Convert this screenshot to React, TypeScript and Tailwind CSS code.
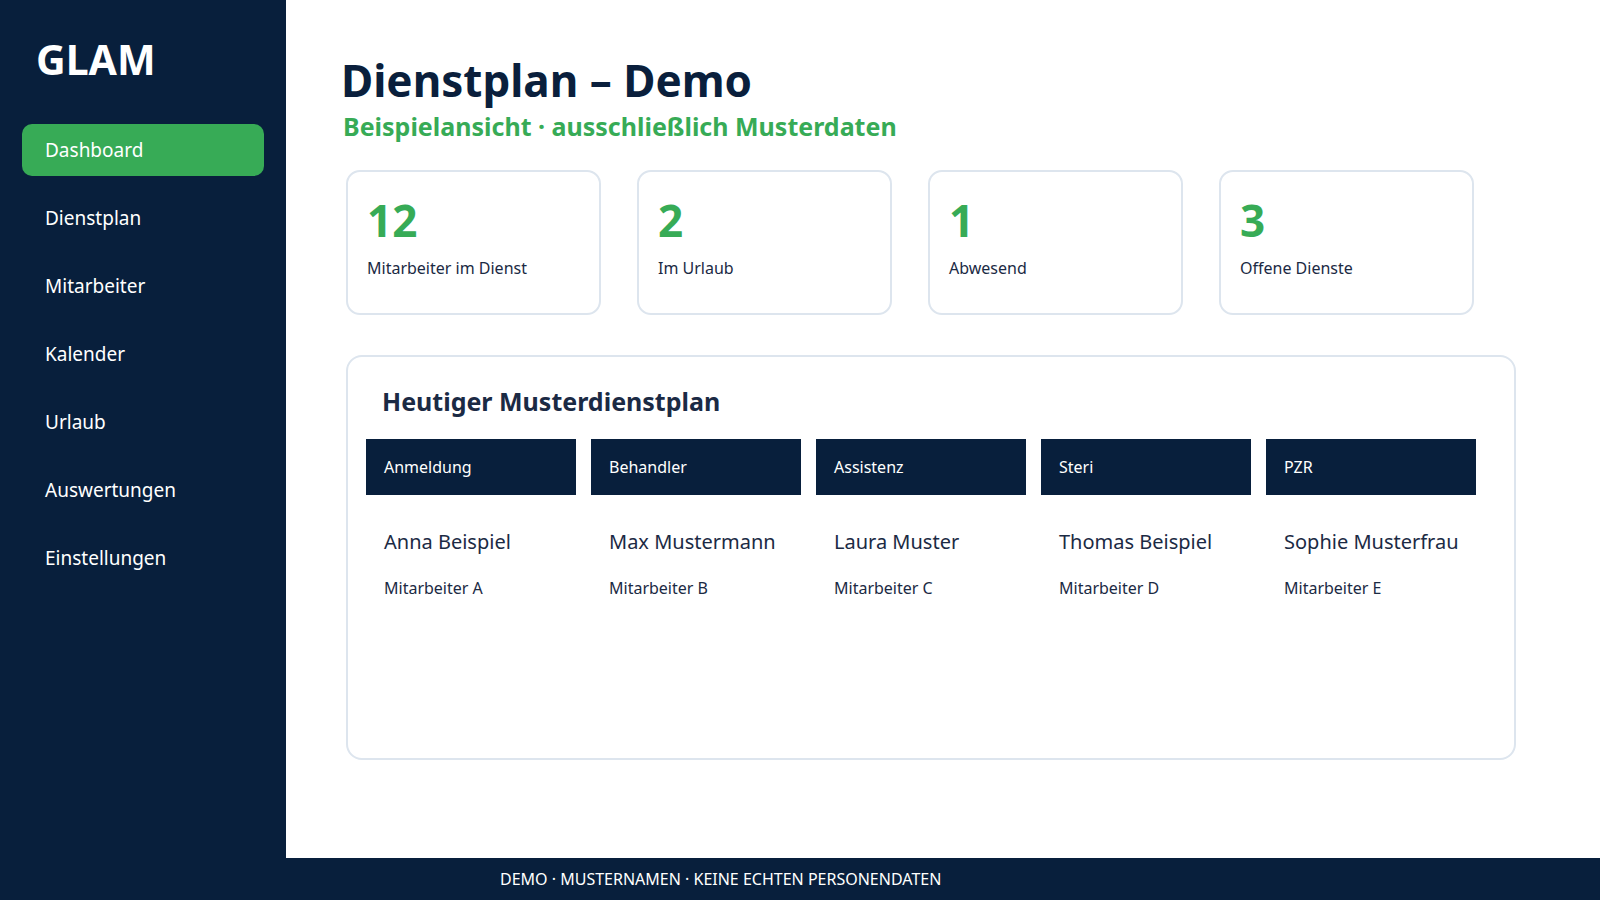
const nav = ["Dashboard", "Dienstplan", "Mitarbeiter", "Kalender", "Urlaub", "Auswertungen", "Einstellungen"];

const stats = [
  { value: "12", label: "Mitarbeiter im Dienst" },
  { value: "2", label: "Im Urlaub" },
  { value: "1", label: "Abwesend" },
  { value: "3", label: "Offene Dienste" },
];

const shifts = [
  { area: "Anmeldung", name: "Anna Beispiel", role: "Mitarbeiter A" },
  { area: "Behandler", name: "Max Mustermann", role: "Mitarbeiter B" },
  { area: "Assistenz", name: "Laura Muster", role: "Mitarbeiter C" },
  { area: "Steri", name: "Thomas Beispiel", role: "Mitarbeiter D" },
  { area: "PZR", name: "Sophie Musterfrau", role: "Mitarbeiter E" },
];

export default function App() {
  return (
    <div className="flex h-[900px] w-[1600px] overflow-hidden bg-white font-['DejaVu_Sans',sans-serif]">
      <aside className="flex w-[286px] shrink-0 flex-col bg-[#081f3c] px-[22px] pt-[34px]">
        <div className="pl-[14px] text-[41px] font-bold leading-[50px] text-white">GLAM</div>
        <nav className="mt-[40px] flex flex-col gap-[16px]">
          {nav.map((item, i) => (
            <div
              key={item}
              className={
                "flex h-[52px] items-center rounded-[10px] pl-[23px] text-[19px] text-white " +
                (i === 0 ? "bg-[#37ab56]" : "")
              }
            >
              {item}
            </div>
          ))}
        </nav>
      </aside>

      <div className="flex flex-1 flex-col">
        <main className="flex-1 pl-[55px] pt-[52px]">
          <h1 className="text-[44px] font-bold leading-[56px] text-[#0a1f3c]">Dienstplan – Demo</h1>
          <p className="mt-[2px] pl-[2px] text-[25px] font-bold leading-[32px] text-[#37ab56]">
            Beispielansicht · ausschließlich Musterdaten
          </p>

          <div className="mt-[28px] flex gap-[36px] pl-[5px]">
            {stats.map((s) => (
              <div key={s.label} className="h-[145px] w-[255px] rounded-[14px] border-2 border-[#dde5ee] px-[19px] pt-[22px]">
                <div className="text-[44px] font-bold leading-[52px] text-[#37ab56]">{s.value}</div>
                <div className="mt-[10px] text-[16px] text-[#1b2a44]">{s.label}</div>
              </div>
            ))}
          </div>

          <div className="mt-[40px] ml-[5px] h-[405px] w-[1170px] rounded-[16px] border-2 border-[#dde5ee] px-[18px] pt-[26px]">
            <h2 className="pl-[16px] text-[25px] font-bold leading-[36px] text-[#1b2a44]">Heutiger Musterdienstplan</h2>
            <div className="mt-[20px] flex gap-[15px]">
              {shifts.map((s) => (
                <div key={s.area} className="w-[210px]">
                  <div className="flex h-[56px] items-center bg-[#081f3c] pl-[18px] text-[16px] text-white">{s.area}</div>
                  <div className="mt-[34px] pl-[18px] text-[20px] leading-[26px] whitespace-nowrap text-[#1b2a44]">{s.name}</div>
                  <div className="mt-[21px] pl-[18px] text-[16px] text-[#1b2a44]">{s.role}</div>
                </div>
              ))}
            </div>
          </div>
        </main>
        <footer className="flex h-[42px] items-center bg-[#081f3c] pl-[214px] text-[16px] text-white">
          DEMO · MUSTERNAMEN · KEINE ECHTEN PERSONENDATEN
        </footer>
      </div>
    </div>
  );
}
